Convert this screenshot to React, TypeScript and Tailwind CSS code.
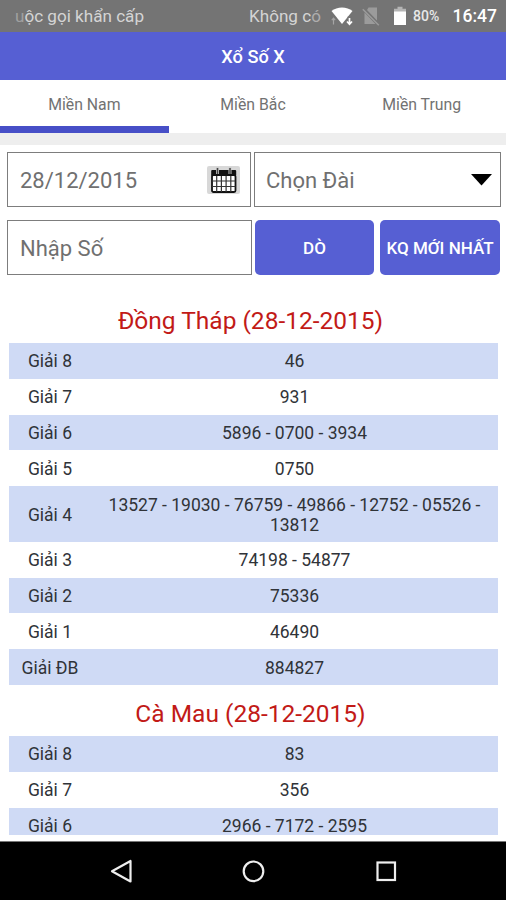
import { useState } from 'react';

type Prize = { label: string; numbers: string };
type Draw = { province: string; date: string; prizes: Prize[] };

const REGIONS = ['Miền Nam', 'Miền Bắc', 'Miền Trung'];

const DRAWS: Draw[] = [
  {
    province: 'Đồng Tháp',
    date: '28-12-2015',
    prizes: [
      { label: 'Giải 8', numbers: '46' },
      { label: 'Giải 7', numbers: '931' },
      { label: 'Giải 6', numbers: '5896 - 0700 - 3934' },
      { label: 'Giải 5', numbers: '0750' },
      { label: 'Giải 4', numbers: '13527 - 19030 - 76759 - 49866 - 12752 - 05526 - 13812' },
      { label: 'Giải 3', numbers: '74198 - 54877' },
      { label: 'Giải 2', numbers: '75336' },
      { label: 'Giải 1', numbers: '46490' },
      { label: 'Giải ĐB', numbers: '884827' },
    ],
  },
  {
    province: 'Cà Mau',
    date: '28-12-2015',
    prizes: [
      { label: 'Giải 8', numbers: '83' },
      { label: 'Giải 7', numbers: '356' },
      { label: 'Giải 6', numbers: '2966 - 7172 - 2595' },
    ],
  },
];

function WifiIcon() {
  return (
    <svg width="24" height="20" viewBox="0 0 24 20">
      <path d="M0.500 5C6 .2 16 .2 21.500 5L11 18z" fill="#fff" />
      <path d="M2.500 18.500v-6M.8 14.200l1.700-2 1.700 2" fill="none" stroke="#a5a5a5" strokeWidth="1.200" />
      <path d="M18.500 10.500v7.500M15.500 15l3 3.300 3-3.300" fill="none" stroke="#747474" strokeWidth="3.600" />
      <path d="M18.500 12v6M16 15.500l2.500 2.800 2.500-2.800" fill="none" stroke="#fff" strokeWidth="1.700" />
    </svg>
  );
}

function NoSimIcon() {
  return (
    <svg width="18" height="20" viewBox="0 0 18 20">
      <path d="M6.500 1.500H15v13L5 4zM2.500 6.500L13.500 18h-11z" fill="#9b9b9b" />
      <path d="M.8 3.300l16 16" stroke="#9b9b9b" strokeWidth="1.500" />
    </svg>
  );
}

function BatteryIcon() {
  return (
    <svg width="14" height="20" viewBox="0 0 14 20">
      <path d="M4.500 .8h5v2H13v3.200H1V2.800h3.500z" fill="#b5b5b5" />
      <path d="M1 5.500h12V19H1z" fill="#fff" />
    </svg>
  );
}

function CalendarIcon() {
  return (
    <svg width="33" height="28" viewBox="0 0 33 28">
      <rect width="33" height="28" rx="2" fill="#d8d8d8" />
      <rect x="5" y="9" width="23.500" height="17" rx="1.500" fill="#fff" stroke="#111" strokeWidth="1.800" />
      <rect x="4.200" y="4" width="25" height="6" rx="1" fill="#111" />
      <path d="M10.500 1.500v6.500M23 1.500v6.500" stroke="#c6c6c6" strokeWidth="3" />
      <path d="M10.500 2v6M23 2v6" stroke="#444" strokeWidth="1.500" />
      <path d="M5 15h23.500M5 20.500h23.500M9.700 10v16M14.400 10v16M19.100 10v16M23.800 10v16" stroke="#333" strokeWidth="1.200" />
    </svg>
  );
}

function StatusBar() {
  return (
    <div className="flex h-8 shrink-0 items-center bg-[#747474] pr-[9px] pl-[15px] text-[17.1px] text-[#d4d4d4]">
      <span className="w-[234px] pt-px whitespace-nowrap">
        <span className="text-[#a0a0a0]">u</span>ộc gọi khẩn cấp
      </span>
      <span className="w-[82px] pt-px whitespace-nowrap">
        Không c<span className="text-[#adadad]">ó</span>
      </span>
      <div className="flex flex-1 items-center">
        <WifiIcon />
        <span className="ml-[7px] flex"><NoSimIcon /></span>
        <span className="ml-[13px] flex"><BatteryIcon /></span>
        <span className="ml-[6px] pt-px text-[14px] font-medium text-[#e8e8e8]">80%</span>
        <span className="ml-auto pt-px text-[17.5px] font-medium text-white">16:47</span>
      </div>
    </div>
  );
}

function SearchForm() {
  const field = 'flex h-[55px] items-center border-[1.5px] border-[#7d7d7d] bg-white text-[22px] text-[#707070]';
  const button = 'h-[55px] rounded-[5px] bg-[#565fd3] pt-[2px] text-[17px] font-medium text-white whitespace-nowrap';

  return (
    <div className="flex shrink-0 flex-col gap-[13px] pr-[5px] pl-[7px]">
      <div className="flex gap-[3px]">
        <div className={`${field} w-[244px] justify-between pr-[10px] pl-[12px]`}>
          <span className="pt-px">28/12/2015</span>
          <CalendarIcon />
        </div>
        <div className={`${field} w-[247px] justify-between pr-[8px] pl-[11px]`}>
          <span className="pt-px">Chọn Đài</span>
          <svg width="21" height="12" viewBox="0 0 21 12">
            <path d="M0 0h21L10.500 11.500z" fill="#000" />
          </svg>
        </div>
      </div>
      <div className="flex">
        <div className={`${field} w-[245px] pl-[12px]`}>
          <span className="pt-px">Nhập Số</span>
        </div>
        <button className={`${button} ml-[3px] w-[119px]`}>DÒ</button>
        <button className={`${button} ml-[6px] w-[120px]`}>KQ MỚI NHẤT</button>
      </div>
    </div>
  );
}

function DrawResult({ draw }: { draw: Draw }) {
  return (
    <section>
      <h2 className="flex h-[51px] items-center justify-center pt-[8px] pr-[6px] text-[24.5px] text-[#c21a17]">
        {draw.province} ({draw.date})
      </h2>
      {draw.prizes.map((prize, i) => (
        <div
          key={prize.label}
          className={`flex items-center pt-[8.4px] pb-[7.4px] text-center text-[17.5px] leading-5 text-[#303338] ${
            i % 2 === 0 ? 'bg-[#cfdaf5]' : 'bg-white'
          }`}
        >
          <div className="w-[82px]">{prize.label}</div>
          <div className="flex-1 px-3">{prize.numbers}</div>
        </div>
      ))}
    </section>
  );
}

export default function App() {
  const [region, setRegion] = useState(0);

  return (
    <div className="flex h-[900px] w-[506px] flex-col overflow-hidden bg-white font-['Roboto',sans-serif]">
      <StatusBar />
      <header className="flex h-12 shrink-0 items-center justify-center bg-[#565fd3] pt-px text-[18.2px] font-medium text-white">
        Xổ Số X
      </header>
      <nav className="flex h-[53px] shrink-0">
        {REGIONS.map((name, i) => (
          <button
            key={name}
            onClick={() => setRegion(i)}
            className={`flex-1 border-b-[7px] pt-[4px] text-[15.8px] text-[#727272] ${
              i === region ? 'border-[#474fc7]' : 'border-transparent'
            }`}
          >
            {name}
          </button>
        ))}
      </nav>
      <div className="mb-[7px] h-3 shrink-0 bg-[#eeeeee]" />
      <SearchForm />
      <main className="mt-[17px] mr-2 mb-[6px] ml-[9px] min-h-0 flex-1 overflow-hidden">
        {DRAWS.map((draw) => (
          <DrawResult key={draw.province} draw={draw} />
        ))}
      </main>
      <footer className="flex h-[59px] shrink-0 items-center border-t border-[#777] bg-black">
        <svg width="506" height="58" viewBox="0 0 506 58" fill="none" stroke="#eee" strokeWidth="2.200">
          <path d="M130.500 19v20.500l-18.500-10.200z" strokeLinejoin="round" />
          <circle cx="253.500" cy="29.300" r="9.800" />
          <rect x="377.500" y="20.500" width="17.500" height="17.500" />
        </svg>
      </footer>
    </div>
  );
}
